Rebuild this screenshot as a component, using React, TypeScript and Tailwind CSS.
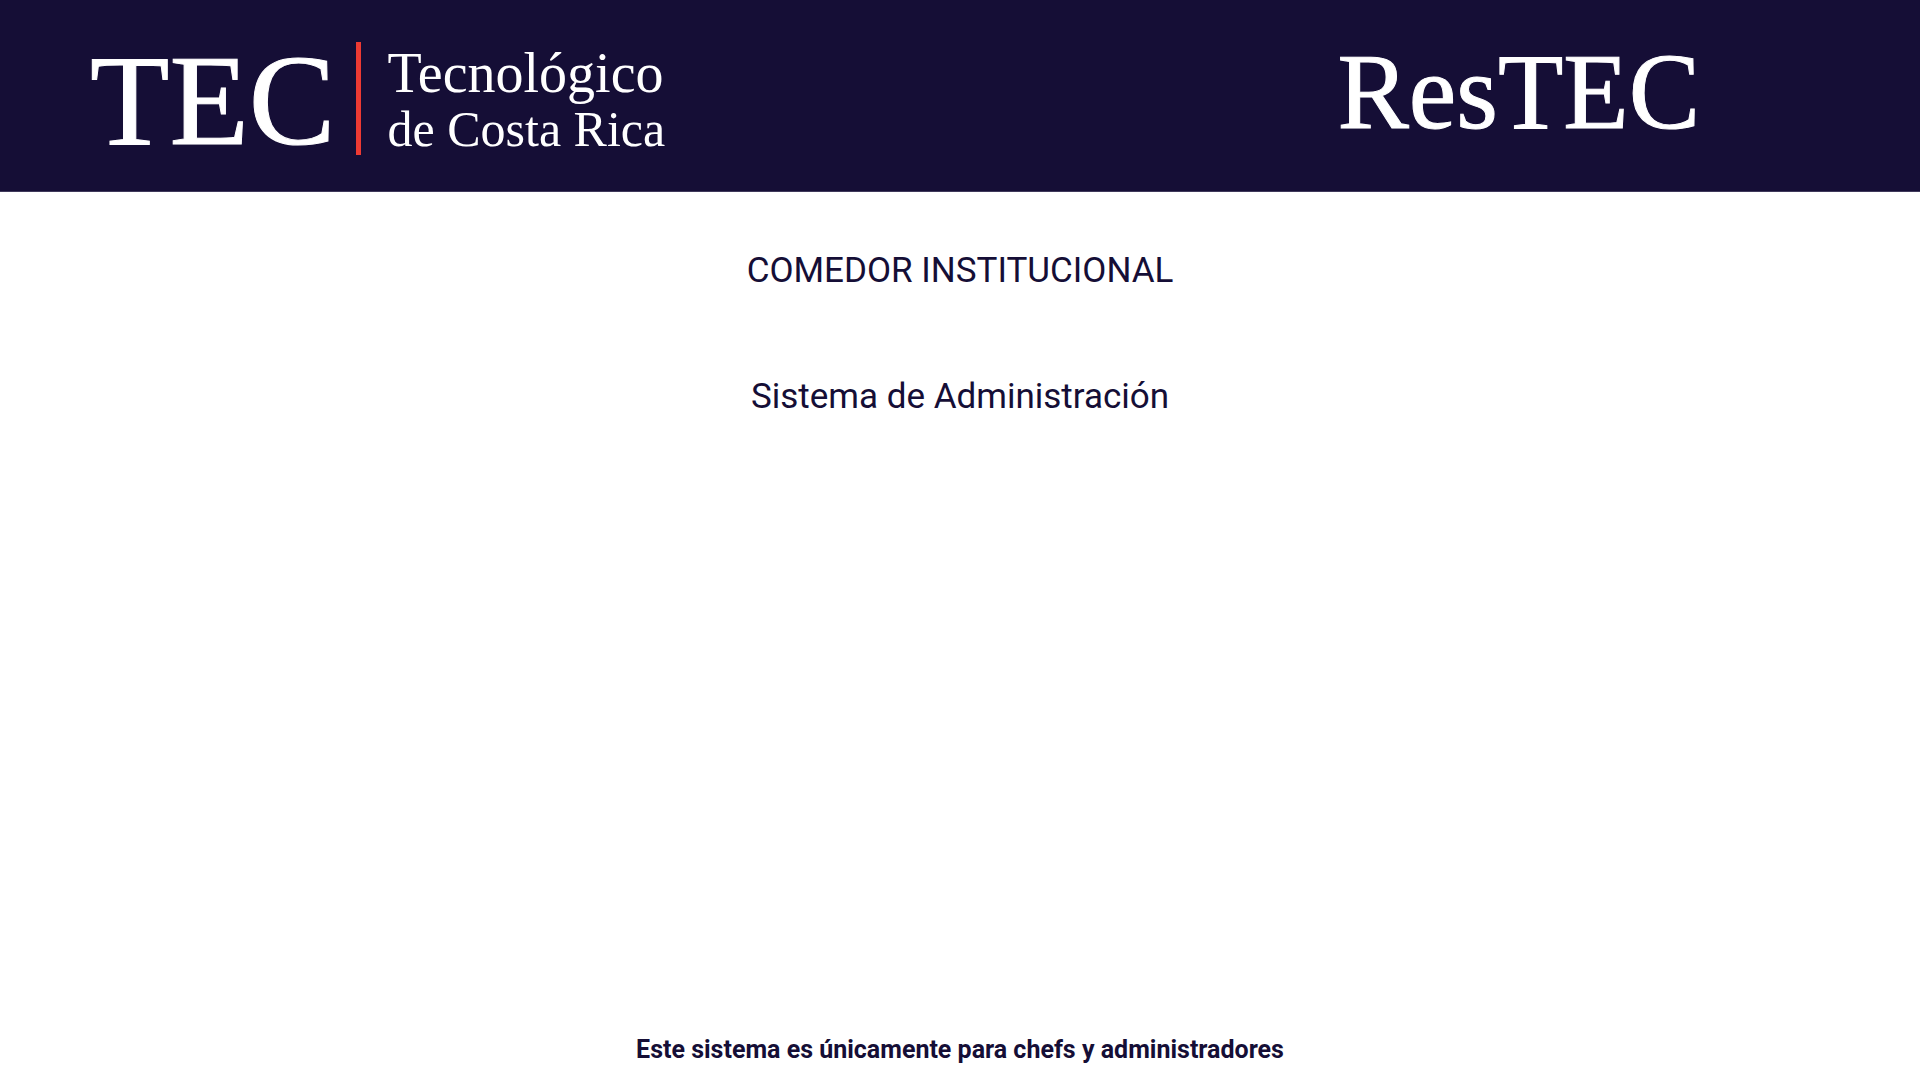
export default function App() {
  return (
    <div className="flex min-h-screen flex-col bg-white font-['Roboto',sans-serif] text-[#150e36]">
      <header className="flex h-48 items-center justify-between border-b border-[#3f395b] bg-[#150e36] pr-[220px] pl-[90px] font-['Liberation_Serif',serif] whitespace-nowrap text-white">
        <div className="flex items-center pt-1.5">
          <span className="pt-0.5 text-[130px] leading-none [-webkit-text-stroke:1px_white]">TEC</span>
          <span className="ml-5 h-[113px] w-[5px] bg-[#ee3a33]" />
          <div className="ml-[27px] flex flex-col pt-1">
            <span className="text-[56px] leading-[56px]">Tecnológico</span>
            <span className="text-[50px] leading-[56px]">de Costa Rica</span>
          </div>
        </div>
        <h1 className="pb-1.5 text-[107px] leading-none [-webkit-text-stroke:1px_white]">ResTEC</h1>
      </header>
      <main className="flex grow flex-col items-center pt-[59px] text-center text-[35px] leading-10">
        <h2>COMEDOR INSTITUCIONAL</h2>
        <p className="mt-[86px]">Sistema de Administración</p>
      </main>
      <footer className="pb-[14px] text-center text-[25px] leading-8 font-bold">
        Este sistema es únicamente para chefs y administradores
      </footer>
    </div>
  );
}
